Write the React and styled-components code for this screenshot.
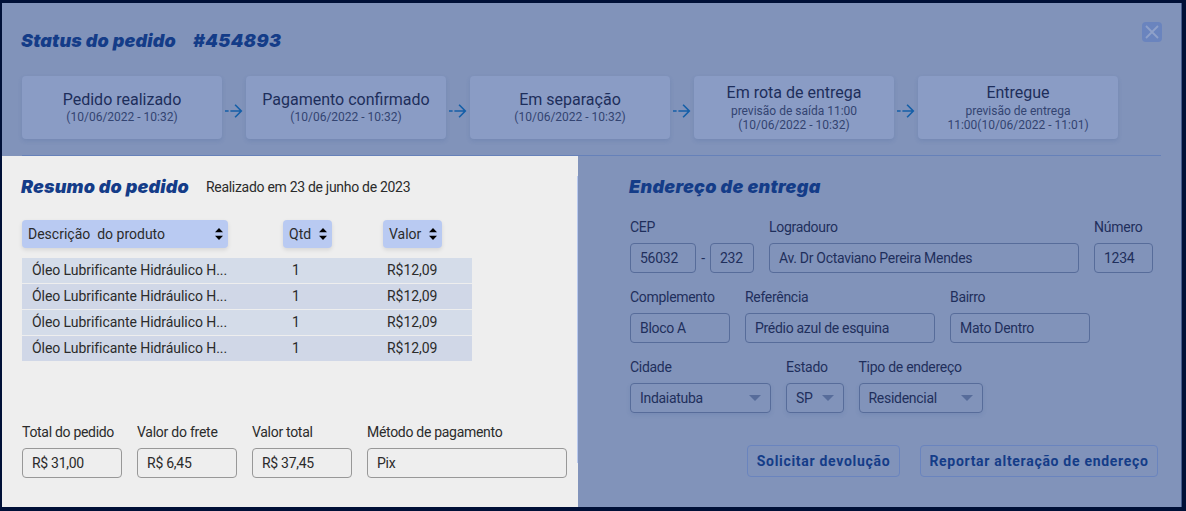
import React from "react";
import styled, { createGlobalStyle } from "styled-components";

const Global = createGlobalStyle`
  * { box-sizing: border-box; }
  body { margin: 0; background: #001037; }
`;

const Backdrop = styled.div`
  width: 1186px;
  height: 511px;
  padding: 3px 4px 4px 2px;
  background: #001037;
  font-family: Roboto, "Liberation Sans", sans-serif;
  font-size: 14px;
  overflow: hidden;
`;

const Modal = styled.div`
  height: 504px;
  background: #8193ba;
  color: #1f2f5c;
  border-right: 1px solid #435a8c;
  display: flex;
  flex-direction: column;
`;

const Top = styled.div`
  padding: 0 20px 0 20px;
  height: 153px;
  flex: none;
`;

const Header = styled.header`
  display: flex;
  justify-content: space-between;
  align-items: flex-start;
  height: 73px;
  padding-top: 20px;
`;

const Titles = styled.div`
  display: flex;
  height: 36px;
  align-items: center;
  gap: ${(p) => p.$gap}px;
  margin-left: ${(p) => (p.$gap ? -1 : 0)}px;
`;

const Heading = styled.h2`
  margin: 0;
  width: ${(p) => p.$w}px;
  font: italic 900 18px/24px Inter, sans-serif;
  letter-spacing: ${(p) => p.$ls || 0}px;
  color: #143c88;
  white-space: nowrap;
`;

const CloseButton = styled.button`
  width: 20px;
  height: 20px;
  margin-right: -1px;
  margin-top: -1px;
  padding: 0;
  border: 0;
  border-radius: 4px;
  background: #6a84be;
  display: grid;
  place-items: center;
`;

const Steps = styled.div`
  display: flex;
  height: 63px;
  margin-bottom: 16px;
`;

const StepCard = styled.div`
  width: 200px;
  flex: none;
  height: 63px;
  border-radius: 4px;
  background: #8a9cc5;
  box-shadow: 0 2px 4px rgba(50, 80, 140, 0.16);
  display: flex;
  flex-direction: column;
  align-items: center;
  justify-content: center;
  text-align: center;
`;

const StepTitle = styled.div`
  font-size: 16px;
  line-height: 19px;
  color: #1d2e5b;
`;

const StepNote = styled.div`
  font-size: 12px;
  line-height: 14px;
  color: #334471;
  white-space: pre-line;
  margin-top: ${(p) => (p.$two ? 2 : 1)}px;
`;

const StepText = styled.div`
  padding-bottom: ${(p) => (p.$two ? 0 : 1)}px;
`;

const ArrowCell = styled.div`
  width: 24px;
  flex: none;
  display: grid;
  place-items: center;
  padding-top: 7px;
`;

const Rule = styled.div`
  height: 1px;
  background: #6681b9;
`;

const Body = styled.div`
  display: flex;
  flex: 1;
`;

const Summary = styled.section`
  width: 576px;
  height: 351px;
  padding: 13px 0 0 20px;
  background: #eeeeee;
  color: #2b2b2b;
  display: flex;
`;

const SummaryContent = styled.div`
  width: 555px;
`;

const Divider = styled.div`
  width: 1px;
  height: 287px;
  margin-top: 7px;
  background: #b9c9ee;
`;

const PlacedOn = styled.span`
  white-space: nowrap;
  letter-spacing: -0.3px;
`;

const ColumnHeads = styled.div`
  display: grid;
  grid-template-columns: 261px 100px 100px;
  margin-top: 15px;
`;

const SortButton = styled.button`
  width: ${(p) => p.$w}px;
  height: 28px;
  padding: 0 5px 0 6px;
  border: 0;
  border-radius: 4px;
  background: #b9caf2;
  box-shadow: 0 2px 4px rgba(0, 0, 0, 0.1);
  font: 14px Roboto, sans-serif;
  color: #2b2b2b;
  display: flex;
  align-items: center;
  justify-content: space-between;
  white-space: pre;
`;

const Rows = styled.div`
  display: grid;
  row-gap: 1px;
  width: 450px;
  margin-top: 10px;
`;

const ProductRow = styled.div`
  display: grid;
  grid-template-columns: 260px 95px 1fr;
  align-items: center;
  height: 25px;
  padding: 0 0 1px 10px;
  letter-spacing: -0.06px;
  background: #d4dce9;
  &:nth-child(even) { background: #d0d7e7; }
`;

const FieldRow = styled.div`
  display: flex;
  gap: 15px;
  margin-top: ${(p) => p.$mt || 0}px;
`;

const FieldBox = styled.label`
  display: flex;
  flex-direction: column;
  width: ${(p) => p.$w}px;
  letter-spacing: ${(p) => p.$ls ?? -0.25}px;
`;

const FieldLabel = styled.span`
  height: 16px;
  line-height: 16px;
  margin-bottom: 8px;
  white-space: nowrap;
`;

const FieldValue = styled.span`
  width: ${(p) => (p.$w ? p.$w + "px" : "100%")};
  height: 30px;
  padding: 0 9px;
  border: 1px solid ${(p) => (p.$dim ? "#576c9a" : "#989898")};
  border-radius: 4px;
  display: flex;
  align-items: center;
  justify-content: space-between;
  white-space: nowrap;
  box-shadow: ${(p) => (p.$select ? "0 2px 4px rgba(50,80,140,.12)" : "none")};
`;

const CepGroup = styled.span`
  display: flex;
  align-items: center;
  justify-content: space-between;
`;

const Address = styled.section`
  flex: 1;
  padding: 13px 23px 0 51px;
`;

const Indent = styled.div`
  padding-left: 1px;
`;

const Actions = styled.div`
  display: flex;
  justify-content: flex-end;
  gap: 20px;
  margin-top: 32px;
`;

const ActionButton = styled.button`
  width: ${(p) => p.$w}px;
  height: 32px;
  padding: 0;
  border: 1px solid #6a84be;
  border-radius: 4px;
  background: transparent;
  font: 700 14px Roboto, sans-serif;
  letter-spacing: ${(p) => p.$ls}px;
  color: #143c88;
  white-space: nowrap;
`;

const Arrow = () => (
  <svg width="18" height="14" viewBox="0 0 18 14" fill="none" stroke="#145fa8" strokeWidth="1.6">
    <path d="M0 7H3.6M5.4 7H16.5M10.1 0.8L16.3 7L10.1 13.2" />
  </svg>
);

const Sort = () => (
  <svg width="8" height="12" viewBox="0 0 8 12" fill="#000">
    <path d="M4 0L8 4.3H0ZM4 12L0 7.7H8Z" />
  </svg>
);

const Caret = () => (
  <svg width="12" height="6" viewBox="0 0 12 6" fill="#576c9a">
    <path d="M0 0H12L6 6Z" />
  </svg>
);

const Field = ({ label, value, w, dim, select, ls }) => (
  <FieldBox $w={w} $ls={ls}>
    <FieldLabel>{label}</FieldLabel>
    <FieldValue $dim={dim} $select={select}>
      {value}
      {select && <Caret />}
    </FieldValue>
  </FieldBox>
);

const steps = [
  ["Pedido realizado", "(10/06/2022 - 10:32)"],
  ["Pagamento confirmado", "(10/06/2022 - 10:32)"],
  ["Em separação", "(10/06/2022 - 10:32)"],
  ["Em rota de entrega", "previsão de saída 11:00\n(10/06/2022 - 10:32)"],
  ["Entregue", "previsão de entrega\n11:00(10/06/2022 - 11:01)"],
];

export default function App() {
  return (
    <Backdrop>
      <Global />
      <Modal>
        <Top>
          <Header>
            <Titles $gap={17}>
              <Heading $w={155} $ls={0.15}>Status do pedido</Heading>
              <Heading $w={90} $ls={0.4}>#454893</Heading>
            </Titles>
            <CloseButton aria-label="Fechar">
              <svg width="14" height="14" viewBox="0 0 14 14" stroke="#8fa1c9" strokeWidth="1.8">
                <path d="M1 1L13 13M13 1L1 13" />
              </svg>
            </CloseButton>
          </Header>
          <Steps>
            {steps.map(([title, note], i) => (
              <React.Fragment key={title}>
                {i > 0 && <ArrowCell><Arrow /></ArrowCell>}
                <StepCard>
                  <StepText $two={i > 2}>
                    <StepTitle>{title}</StepTitle>
                    <StepNote $two={i > 2}>{note}</StepNote>
                  </StepText>
                </StepCard>
              </React.Fragment>
            ))}
          </Steps>
          <Rule />
        </Top>
        <Body>
          <Summary>
            <SummaryContent>
              <Titles $gap={16}>
                <Heading $w={169} $ls={0.15}>Resumo do pedido</Heading>
                <PlacedOn>Realizado em 23 de junho de 2023</PlacedOn>
              </Titles>
              <ColumnHeads>
                <SortButton $w={206}>{"Descrição  do produto"}<Sort /></SortButton>
                <SortButton $w={49}>Qtd<Sort /></SortButton>
                <SortButton $w={59}>Valor<Sort /></SortButton>
              </ColumnHeads>
              <Rows>
                {[0, 1, 2, 3].map((n) => (
                  <ProductRow key={n}>
                    <span>Óleo Lubrificante Hidráulico H...</span>
                    <span>1</span>
                    <span>R$12,09</span>
                  </ProductRow>
                ))}
              </Rows>
              <FieldRow $mt={63}>
                <Field label="Total do pedido" value="R$ 31,00" w={100} ls={-0.3} />
                <Field label="Valor do frete" value="R$ 6,45" w={100} />
                <Field label="Valor total" value="R$ 37,45" w={100} ls={-0.3} />
                <Field label="Método de pagamento" value="Pix" w={200} ls={-0.3} />
              </FieldRow>
            </SummaryContent>
            <Divider />
          </Summary>
          <Address>
            <Titles>
              <Heading $w={192} $ls={0.28}>Endereço de entrega</Heading>
            </Titles>
            <Indent>
              <FieldRow $mt={14}>
                <FieldBox $w={124}>
                  <FieldLabel>CEP</FieldLabel>
                  <CepGroup>
                    <FieldValue $dim $w={66}>56032</FieldValue>
                    -
                    <FieldValue $dim $w={44}>232</FieldValue>
                  </CepGroup>
                </FieldBox>
                <Field dim label="Logradouro" value="Av. Dr Octaviano Pereira Mendes" w={310} ls={-0.3} />
                <Field dim label="Número" value="1234" w={59} />
              </FieldRow>
              <FieldRow $mt={16}>
                <Field dim label="Complemento" value="Bloco A" w={100} ls={-0.3} />
                <Field dim label="Referência" value="Prédio azul de esquina" w={190} ls={-0.3} />
                <Field dim label="Bairro" value="Mato Dentro" w={140} ls={-0.3} />
              </FieldRow>
              <FieldRow $mt={16}>
                <Field dim select label="Cidade" value="Indaiatuba" w={141} ls={-0.3} />
                <Field dim select label="Estado" value="SP" w={57.5} />
                <Field dim select label="Tipo de endereço" value="Residencial" w={124} ls={-0.28} />
              </FieldRow>
            </Indent>
            <Actions>
              <ActionButton $w={153} $ls={0.7}>Solicitar devolução</ActionButton>
              <ActionButton $w={238} $ls={0.7}>Reportar alteração de endereço</ActionButton>
            </Actions>
          </Address>
        </Body>
      </Modal>
    </Backdrop>
  );
}
